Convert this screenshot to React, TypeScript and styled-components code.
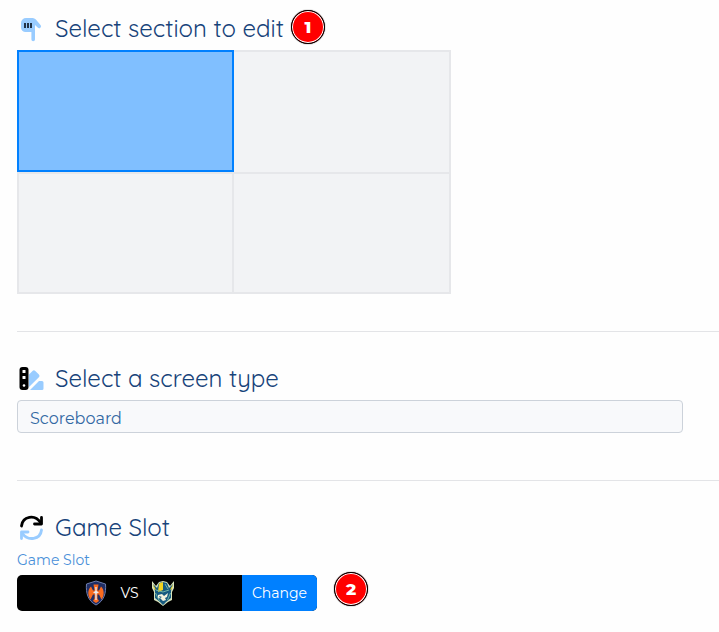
import React, { useState } from "react";
import styled, { createGlobalStyle } from "styled-components";

const GlobalStyle = createGlobalStyle`
  * { box-sizing: border-box; }
  body { margin: 0; background: #fefefe; font-family: Quicksand, Lato, sans-serif; }
`;

const bodyFont = `Montserrat, Inter, sans-serif`;

const Page = styled.main`
  padding: 8px 0 20px 17px;
`;

const Section = styled.section`
  & + & {
    border-top: 1px solid #e3e4e7;
  }
`;

const Header = styled.header<{ $top?: number }>`
  display: flex;
  align-items: center;
  height: 40px;
  margin: ${(p) => p.$top ?? 0}px 0 2px;
`;

const Title = styled.h2`
  margin: 0 7px 0 10px;
  color: #17437a;
  font-size: 24px;
  font-weight: 400;
  line-height: 30px;
  white-space: nowrap;
`;

const Icon = styled.svg`
  display: block;
  width: 28px;
  height: 28px;
  flex: none;
`;

const Badge = styled.span<{ $lift: number }>`
  display: grid;
  place-items: center;
  flex: none;
  width: 34px;
  height: 34px;
  margin-bottom: ${(p) => p.$lift}px;
  border: 1px solid #000;
  border-radius: 50%;
  background: #f00;
  box-shadow: inset 0 0 0 1px #fff, 0 0 1px #000;
  color: #fff;
  font: 800 17px/1 ${bodyFont};
`;

const ScreenGrid = styled.div`
  display: grid;
  grid-template-columns: 1fr 1fr;
  grid-auto-rows: 122px;
  max-width: 434px;
  margin-bottom: 37px;
`;

const Cell = styled.button<{ $selected: boolean }>`
  padding: 0;
  border: 0 solid ${(p) => (p.$selected ? "#0080ff" : "#e6e7ea")};
  border-width: ${(p) => (p.$selected ? "2px" : "2px 2px 0 0")};
  background: ${(p) => (p.$selected ? "#80bfff" : "#f2f3f5")};
  cursor: pointer;

  &:nth-child(odd) { border-left-width: 2px; }
  &:nth-child(n + 3) { border-bottom-width: 2px; }
`;

const TypeSelect = styled.select`
  display: block;
  appearance: none;
  width: calc(100% - 36px);
  height: 33px;
  margin-bottom: 47px;
  padding: 4px 12px 0;
  border: 1px solid #ccd2da;
  border-radius: 4px;
  background: #f8f9fb;
  color: #3268a3;
  font: 400 16px/24px ${bodyFont};
`;

const SlotLabel = styled.div`
  margin-bottom: 1px;
  color: #4a90d9;
  font: 400 14px/22px ${bodyFont};
`;

const SlotRow = styled.div`
  display: flex;
  align-items: center;
  gap: 17px;
`;

const SlotGroup = styled.div`
  display: flex;
  width: 300px;
  height: 36px;
  overflow: hidden;
  border-radius: 5px;
  background: #000;
`;

const Matchup = styled.div`
  display: flex;
  flex: 1;
  align-items: center;
  justify-content: center;
  gap: 13px;
  color: #fff;
  font: 400 14px/20px ${bodyFont};
`;

const TeamLogo = styled.svg`
  display: block;
  width: 22px;
  height: 26px;
`;

const ChangeButton = styled.button`
  width: 75px;
  padding: 0;
  border: 0;
  background: #0080ff;
  color: #fff;
  font: 400 14px/20px ${bodyFont};
  cursor: pointer;
`;

const HandIcon = () => (
  <Icon viewBox="0 0 28 28" aria-hidden="true">
    <path
      fill="#99ccff"
      d="M9 4h5.500c2 0 3.500.6 4.800 2l4.200 5a1.900 1.900 0 0 1-2.800 2.600L18 11v14.500a1.800 1.800 0 0 1-3.600 0V18H8.500A4.500 4.500 0 0 1 4 13.500V9a5 5 0 0 1 5-5Z"
    />
    <path stroke="#152334" strokeWidth="1.800" d="M8 9v5M11 9v5M14 9v5" />
  </Icon>
);

const SwatchIcon = () => (
  <Icon viewBox="0 0 28 28" aria-hidden="true">
    <path fill="#99ccff" d="M12 10.500 15.500 7a2 2 0 0 1 2.800 0l3.600 3.500a2 2 0 0 1 0 2.800L12 23Z" />
    <path fill="#99ccff" d="m13 26 9-9H25a1.500 1.500 0 0 1 1.500 1.500v6A1.500 1.500 0 0 1 25 26Z" />
    <path stroke="#fefefe" d="m12 25.500 10.500-10.500" />
    <rect x="2.500" y="3" width="9" height="23" rx="3" />
    <rect x="5.500" y="6" width="3" height="3" rx=".5" fill="#fff" />
    <rect x="5.500" y="12" width="3" height="3" rx=".5" fill="#fff" />
    <circle cx="7" cy="21.500" r="1.300" fill="#fff" />
  </Icon>
);

const RotateIcon = () => (
  <Icon viewBox="0 0 28 28" fill="none" strokeWidth="2.800" strokeLinecap="round" aria-hidden="true">
    <path stroke="#000" d="M4.500 13C5.500 3 18 1 23.500 9.500" />
    <path stroke="#000" strokeLinejoin="round" d="M24.500 4.500v6.500H17.500" />
    <path stroke="#99ccff" d="M24.500 17C23.500 26.500 11 28.500 5.500 20.500" />
    <path stroke="#99ccff" strokeLinejoin="round" d="M4.500 25.500v-6.500H11" />
  </Icon>
);

const AxesLogo = () => (
  <TeamLogo viewBox="0 0 22 26" role="img" aria-label="Home team">
    <path fill="#202e65" stroke="#6f7fae" d="m1.500 4 9.500-3 9.500 3c.8 9-1.500 17-9.500 21C3 21 .700 13 1.500 4Z" />
    <path
      fill="#fa6b1f"
      d="M8.500 4.500h5l-1 6h1.500l2-4c3.500 3 3.500 9 .5 13l-2.500-5h-1.500v4l1.500 2.500-3 2-3-2 1.500-2.500v-4H8l-2.500 5c-3-4-3-10 .5-13l2 4h1.500Z"
    />
    <path fill="#e8e9ef" d="M10.300 7h1.400v4l2.300 1.500-2.300 1V20h-1.400v-6.500l-2.300-1 2.300-1.500Z" />
  </TeamLogo>
);

const VikingLogo = () => (
  <TeamLogo viewBox="0 0 22 26" role="img" aria-label="Away team">
    <path fill="#d9e4bd" d="m0 1 4 5 3-4 4-1 4 1 3 4 4-5v7l-2 4v8l-4 2-5 4-5-4-4-2v-8L0 8Z" />
    <path fill="#195b80" d="m1 4 4 4 2-5 4-1 4 1 2 5 4-4-2 7v7l-5 4-3 3-3-3-5-4v-7Z" />
    <path fill="#f2d320" d="M7 3.500 11 2v8l-5 2ZM1 4l3 6-2-1ZM21 4l-3 6 2-1Z" />
    <path fill="#f6f4df" d="m6 15 4-1 2 2 4-3-1 4-2 1 1 2-3 1-3-3-2 1Z" />
    <path stroke="#72b5a6" strokeWidth="1" d="m13 4 3 5M3.500 13l4 8M18.500 13l-3 7M4 10l7 2 6-2" fill="none" />
    <path fill="#195b80" d="m7 16 3 1-2 1ZM10 21h3l-1 3Z" />
  </TeamLogo>
);

export default function App() {
  const [selected, setSelected] = useState(0);

  return (
    <>
      <GlobalStyle />
      <Page>
        <Section aria-labelledby="section-title">
          <Header>
            <HandIcon />
            <Title id="section-title">Select section to edit</Title>
            <Badge $lift={2}>1</Badge>
          </Header>
          <ScreenGrid>
            {[0, 1, 2, 3].map((i) => (
              <Cell
                key={i}
                type="button"
                aria-label={`Section ${i + 1}`}
                aria-pressed={selected === i}
                $selected={selected === i}
                onClick={() => setSelected(i)}
              />
            ))}
          </ScreenGrid>
        </Section>
        <Section>
          <Header $top={26}>
            <SwatchIcon />
            <Title as="label" htmlFor="screen-type">Select a screen type</Title>
          </Header>
          <TypeSelect id="screen-type">
            <option>Scoreboard</option>
          </TypeSelect>
        </Section>
        <Section aria-labelledby="slot-title">
          <Header $top={26}>
            <RotateIcon />
            <Title id="slot-title">Game Slot</Title>
          </Header>
          <SlotLabel id="slot-label">Game Slot</SlotLabel>
          <SlotRow>
            <SlotGroup role="group" aria-labelledby="slot-label">
              <Matchup>
                <AxesLogo />
                <span>VS</span>
                <VikingLogo />
              </Matchup>
              <ChangeButton type="button">Change</ChangeButton>
            </SlotGroup>
            <Badge $lift={8}>2</Badge>
          </SlotRow>
        </Section>
      </Page>
    </>
  );
}
